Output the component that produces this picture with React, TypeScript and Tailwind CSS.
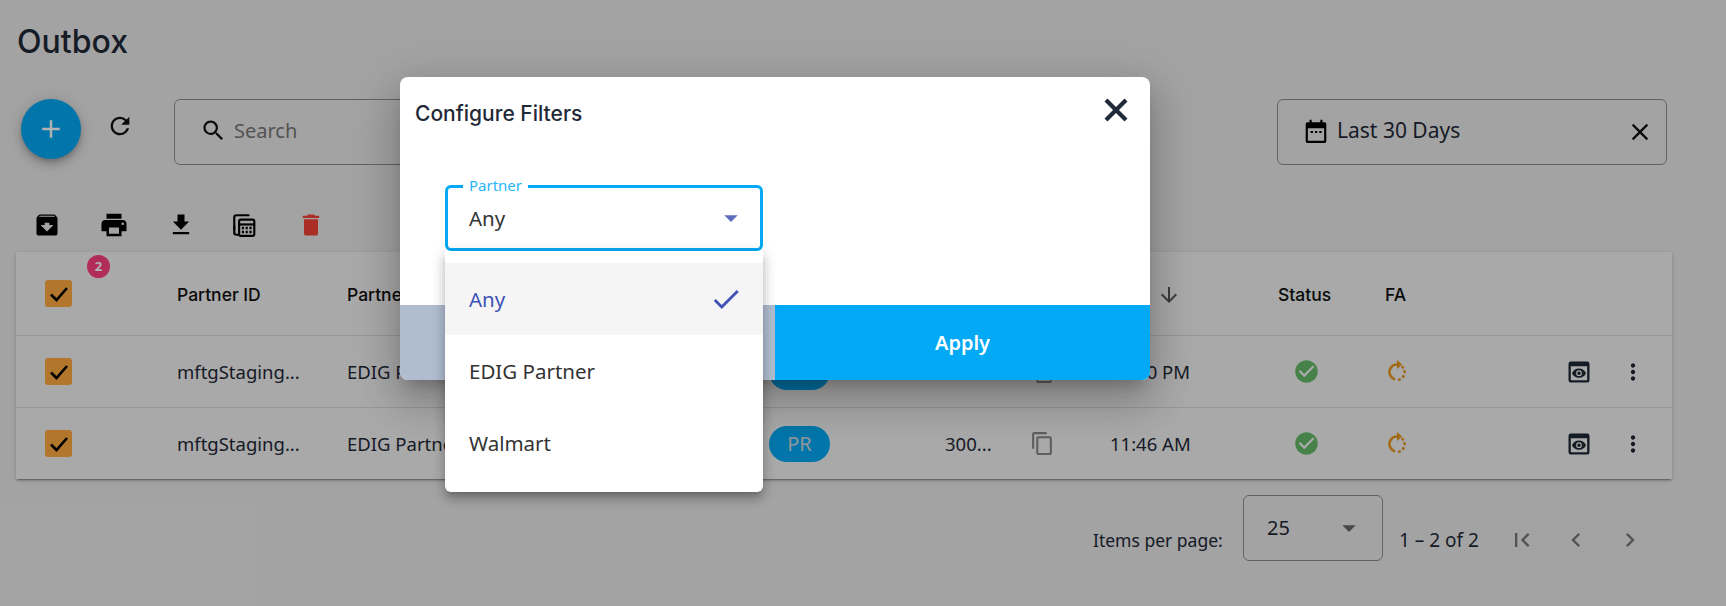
import { MdArchive, MdPrint, MdFileDownload, MdDelete, MdRefresh, MdSearch, MdClose, MdCheckCircle, MdPreview, MdMoreVert, MdOutlineContentCopy, MdFirstPage, MdChevronLeft, MdChevronRight, MdArrowDownward, MdArrowDropDown, MdCheck, MdAdd } from "react-icons/md";

const cols = "grid grid-cols-[161px_170px_422px_176px_87px_78px_168px_107px_180px_55px_1fr] items-center";

function CheckBox() {
  return (
    <div className="ml-[29px] flex h-[27px] w-[27px] items-center justify-center rounded-[3px] bg-[#ffab40]">
      <svg viewBox="0 0 24 24" className="h-[24px] w-[24px]" fill="none" stroke="#000" strokeWidth="2.6">
        <path d="M4 12.5l5.5 5.5L20 6" />
      </svg>
    </div>
  );
}

function Pending() {
  return (
    <svg viewBox="0 0 20 22" className="h-[22px] w-[20px]" fill="none" stroke="#e8981f" strokeWidth="2.5">
      <path d="M10 5.5a7.5 7.5 0 0 0-6 12" />
      <path d="M4 17.5a7.5 7.5 0 0 0 4 3" />
      <path d="M10 5.5a7.5 7.5 0 0 1 7.5 7.5a7.5 7.5 0 0 1-7.5 8" strokeDasharray="2.8 2.2" />
      <path d="M10 1l5 4.5-5 4.5z" fill="#e8981f" stroke="none" />
    </svg>
  );
}

function CalcCopy() {
  return (
    <svg viewBox="0 0 24 24" className="ml-[-2px] mr-[2px] h-[26px] w-[26px]" fill="none" stroke="#000" strokeWidth="2">
      <path d="M3 17V5a2 2 0 0 1 2-2h12" />
      <path d="M3 13v6a2 2 0 0 0 2 2h2" />
      <rect x="7.5" y="7" width="14" height="15" rx="1.5" />
      <path d="M7.5 11.5h14" />
      <path d="M10 14.8h2M13.5 14.8h2M17 14.8h2M10 18.5h2M13.5 18.5h2M17 18.5h2" strokeWidth="2.2" />
    </svg>
  );
}

function CalendarIcon() {
  return (
    <svg viewBox="0 0 24 24" className="h-[26px] w-[26px]" fill="none">
      <path d="M6 1.5h2v2.5h8V1.5h2V4h2a1.5 1.5 0 0 1 1.5 1.5v16A1.5 1.5 0 0 1 20 23H4a1.5 1.5 0 0 1-1.5-1.5v-16A1.5 1.5 0 0 1 4 4h2zM4.5 9.5V21h15V9.5z" fill="#000" />
      <path d="M7 13h2.2M11 13h2.2M15 13h2.2" stroke="#000" strokeWidth="1.8" />
    </svg>
  );
}

function Row({ name, time }: { name: string; time: string }) {
  return (
    <div className={`${cols} h-[72px] border-t border-[#d9d9d9] text-[18.5px] text-[#1f2937]`}>
      <CheckBox />
      <div>mftgStaging...</div>
      <div>{name}</div>
      <div>
        <span className="flex h-[36px] w-[61px] items-center justify-center rounded-full bg-[#03a9f4] text-[20px] text-[#cfd8dc]">PR</span>
      </div>
      <div>300...</div>
      <MdOutlineContentCopy className="ml-[-2px] h-[25px] w-[25px] text-[#888]" />
      <div>{time}</div>
      <MdCheckCircle className="ml-[15px] h-[27px] w-[27px] text-[#66bb6a]" />
      <div className="mb-[3px] pl-[2px]">
        <Pending />
      </div>
      <MdPreview className="h-[28px] w-[28px] text-[#1f2937]" />
      <MdMoreVert className="h-[26px] w-[26px] text-[#1f2937]" />
    </div>
  );
}

export default function App() {
  return (
    <div className="relative h-[606px] w-full overflow-hidden bg-[#eaeaea] font-['Noto_Sans',sans-serif] text-[#1f2937]">
      <div className="pl-[17px] pt-[24px] font-['Inter',sans-serif] text-[32px] font-medium leading-[36px] text-[#1f2937]">Outbox</div>

      <div className="mt-[39px] flex h-[66px] items-start pr-[59px]">
        <div className="ml-[21px] flex h-[60px] w-[60px] items-center justify-center rounded-full bg-[#03a9f4] text-white shadow-[0_3px_5px_-1px_rgba(0,0,0,.2),0_6px_10px_0_rgba(0,0,0,.14),0_1px_18px_0_rgba(0,0,0,.12)]">
          <MdAdd className="h-[30px] w-[30px]" />
        </div>
        <MdRefresh className="ml-[25px] mt-[13px] h-[28px] w-[28px] text-[#111]" />
        <div className="ml-[40px] flex h-[66px] w-[900px] items-center rounded-[6px] border border-[#8f8f8f] pb-[3px] pl-[25px]">
          <MdSearch className="h-[27px] w-[27px] text-[#111]" />
          <span className="ml-[7px] text-[20px] text-[#777]">Search</span>
        </div>
        <div className="ml-auto flex h-[66px] w-[390px] items-center rounded-[6px] border border-[#8f8f8f] pb-[3px] pl-[25px]">
          <CalendarIcon />
          <span className="ml-[8px] text-[21px] text-[#1f2937]">Last 30 Days</span>
          <MdClose className="ml-auto mr-[12px] mt-[3px] h-[28px] w-[28px] text-[#111]" />
        </div>
      </div>

      <div className="ml-[33px] mt-[46px] flex h-[28px] items-center gap-[38px]">
        <MdArchive className="h-[28px] w-[28px] text-black" />
        <MdPrint className="h-[30px] w-[30px] text-black" />
        <MdFileDownload className="h-[28px] w-[28px] text-black" />
        <CalcCopy />
        <MdDelete className="h-[28px] w-[28px] text-[#f44336]" />
      </div>

      <div className="relative ml-[16px] mt-[13px] w-[1656px] bg-[#f2f2f2] shadow-[0_3px_1px_-2px_rgba(0,0,0,.2),0_2px_2px_0_rgba(0,0,0,.14),0_1px_5px_0_rgba(0,0,0,.12)]">
        <span className="absolute left-[71px] top-[3px] flex h-[23px] w-[23px] items-center justify-center rounded-full bg-[#ff4081] text-[13px] font-bold text-white">2</span>
        <div className={`${cols} h-[83px] font-['Inter',sans-serif] text-[17.5px] font-medium text-[#111]`}>
          <CheckBox />
          <div className="pt-[3px]">Partner ID</div>
          <div className="pt-[3px]">Partner</div>
          <div />
          <div />
          <div />
          <div className="flex items-center pl-[47px] pt-[3px]">
            <MdArrowDownward className="h-[24px] w-[24px] text-[#555]" />
          </div>
          <div className="pt-[3px]">Status</div>
          <div className="pt-[3px]">FA</div>
          <div />
          <div />
        </div>
        <Row name="EDIG Partner" time="12:10 PM" />
        <Row name="EDIG Partner" time="11:46 AM" />
      </div>

      <div className="mt-[16px] flex h-[66px] items-center pl-[1093px] text-[#1f2937]">
        <span className="mt-[24px] w-[150px] text-[17.5px]">Items per page:</span>
        <div className="flex h-[66px] w-[140px] items-center rounded-[6px] border border-[#8f8f8f] pl-[23px] text-[20px]">
          <span>25</span>
          <MdArrowDropDown className="ml-auto mr-[17px] h-[32px] w-[32px] text-[#666]" />
        </div>
        <span className="ml-[16px] mt-[24px] w-[109px] text-[19px]">1 – 2 of 2</span>
        <div className="mt-[24px] flex gap-[26px]">
          <MdFirstPage className="h-[30px] w-[28px] text-[#777]" />
          <MdChevronLeft className="h-[30px] w-[28px] text-[#777]" />
          <MdChevronRight className="h-[30px] w-[28px] text-[#777]" />
        </div>
      </div>

      <div className="absolute inset-0 bg-black/30" />

      <div className="absolute left-[400px] top-[77px] flex h-[303px] w-[750px] flex-col rounded-[8px] bg-white shadow-[0_11px_15px_-7px_rgba(0,0,0,.2),0_24px_38px_3px_rgba(0,0,0,.14),0_9px_46px_8px_rgba(0,0,0,.12)]">
        <div className="flex h-[70px] items-center justify-between pl-[15px] pr-[22px]">
          <span className="pt-[4px] font-['Inter',sans-serif] text-[21px] font-medium text-[#1f2937]">Configure Filters</span>
          <svg viewBox="0 0 24 24" className="mb-[4px] h-[24px] w-[24px]" fill="none" stroke="#1f2937" strokeWidth="4.2">
            <path d="M2 2l20 20M22 2L2 22" />
          </svg>
        </div>
        <div className="flex-1 pl-[45px] pt-[38px]">
          <div className="relative flex h-[66px] w-[318px] items-center rounded-[6px] border-[3px] border-[#03a9f4] pl-[21px] pr-[16px] text-[20.5px] text-[#333]">
            <span className="absolute left-[15px] top-[-12px] bg-white px-[6px] text-[15px] leading-[18px] text-[#29b6f6]">Partner</span>
            <span>Any</span>
            <MdArrowDropDown className="ml-auto mr-[-3px] h-[32px] w-[32px] text-[#5c6bc0]" />
            <div className="absolute left-[-3px] top-[63px] z-10 w-[318px] rounded-b-[6px] bg-white pb-[13px] pt-[12px] shadow-[0_5px_5px_-3px_rgba(0,0,0,.2),0_8px_10px_1px_rgba(0,0,0,.14),0_3px_14px_2px_rgba(0,0,0,.12)]">
              <div className="flex h-[72px] items-center justify-between bg-[#f5f5f5] pl-[24px] pr-[20px] text-[#3f51b5]">
                <span>Any</span>
                <MdCheck className="h-[34px] w-[34px]" />
              </div>
              <div className="flex h-[72px] items-center pl-[24px]">EDIG Partner</div>
              <div className="flex h-[72px] items-center pl-[24px]">Walmart</div>
            </div>
          </div>
        </div>
        <div className="flex h-[75px]">
          <div className="flex w-[375px] items-center justify-center rounded-bl-[8px] bg-[#b0bcd0] text-[20px] font-semibold text-white">Cancel</div>
          <div className="flex w-[375px] items-center justify-center rounded-br-[8px] bg-[#03a9f4] text-[20px] font-semibold text-white">Apply</div>
        </div>
      </div>
    </div>
  );
}
